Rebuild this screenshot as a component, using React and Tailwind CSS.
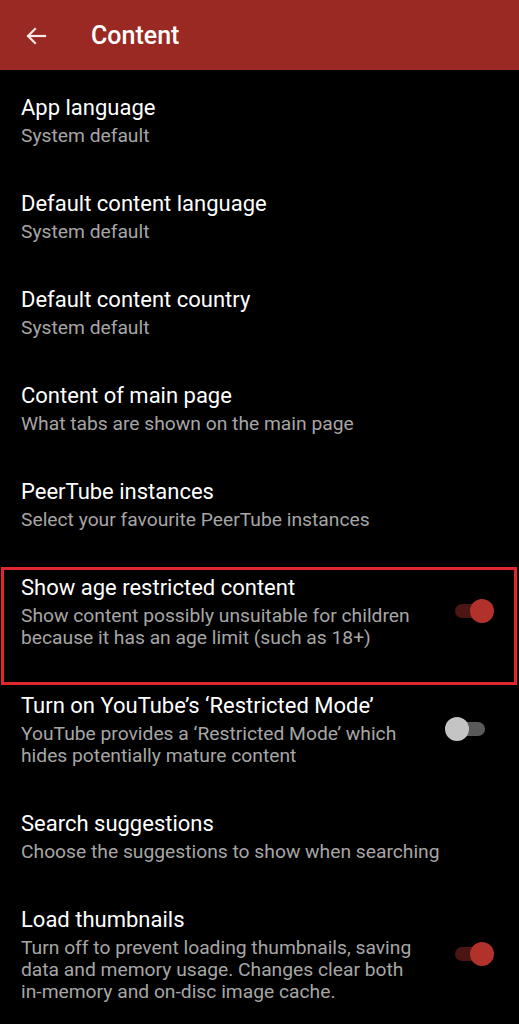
import React from 'react';

const items = [
  { title: 'App language', summary: ['System default'] },
  { title: 'Default content language', summary: ['System default'] },
  { title: 'Default content country', summary: ['System default'] },
  { title: 'Content of main page', summary: ['What tabs are shown on the main page'] },
  { title: 'PeerTube instances', summary: ['Select your favourite PeerTube instances'] },
  {
    title: 'Show age restricted content',
    summary: ['Show content possibly unsuitable for children', 'because it has an age limit (such as 18+)'],
    toggle: true,
    on: true,
    marked: true,
  },
  {
    title: 'Turn on YouTube\u2019s \u2018Restricted Mode\u2019',
    summary: ['YouTube provides a \u2018Restricted Mode\u2019 which', 'hides potentially mature content'],
    toggle: true,
    on: false,
  },
  { title: 'Search suggestions', summary: ['Choose the suggestions to show when searching'] },
  {
    title: 'Load thumbnails',
    summary: [
      'Turn off to prevent loading thumbnails, saving',
      'data and memory usage. Changes clear both',
      'in-memory and on-disc image cache.',
    ],
    toggle: true,
    on: true,
  },
];

const Switch = ({ on }) => (
  <div className="relative w-[50px] h-[24px] shrink-0">
    <div
      className={`absolute left-[10px] top-[5px] w-[30px] h-[14px] rounded-full ${
        on ? 'bg-[#4a1512]' : 'bg-[#5a5a5a]'
      }`}
    />
    <div
      className={`absolute top-0 w-[24px] h-[24px] rounded-full ${
        on ? 'left-[25px] bg-[#b3312b]' : 'left-0 bg-[#c4c4c4]'
      }`}
    />
  </div>
);

const PrefItem = ({ item }) => (
  <div className="relative flex items-center pl-[21px] pr-[24px] pt-[23px] pb-[19px]">
    <div className="flex-1 whitespace-nowrap">
      <div className="text-[22px] leading-[30px] text-white">{item.title}</div>
      <div className="mt-[2px] text-[19.25px] leading-[22px] text-[#a6a6a6]">
        {item.summary.map((line, i) => (
          <div key={i}>{line}</div>
        ))}
      </div>
    </div>
    {item.toggle && <Switch on={item.on} />}
    {/* highlight drawn over the screenshot */}
    {item.marked && (
      <div className="absolute left-[1px] top-[17px] w-[516px] h-[118px] border-[3px] border-[#e1262d] pointer-events-none" />
    )}
  </div>
);

export default function App() {
  return (
    <div className="w-[519px] h-[1024px] overflow-hidden bg-black" style={{ fontFamily: 'Roboto, "Noto Sans", sans-serif' }}>
      {/* App bar */}
      <div className="h-[70px] bg-[#9b2923] flex items-center pt-[1px]">
        <div className="w-[91px] flex items-center pl-[24px]">
          <svg width="24" height="24" viewBox="0 0 24 24" fill="none" stroke="#f5e9e8" strokeWidth="2.2" strokeLinecap="square">
            <path d="M21 12H4.5" />
            <path d="M11 5l-7 7 7 7" />
          </svg>
        </div>
        <div className="text-[25px] font-medium text-white">Content</div>
      </div>

      <div className="flex flex-col">
        {items.map((item, i) => (
          <PrefItem key={i} item={item} />
        ))}
      </div>
    </div>
  );
}
